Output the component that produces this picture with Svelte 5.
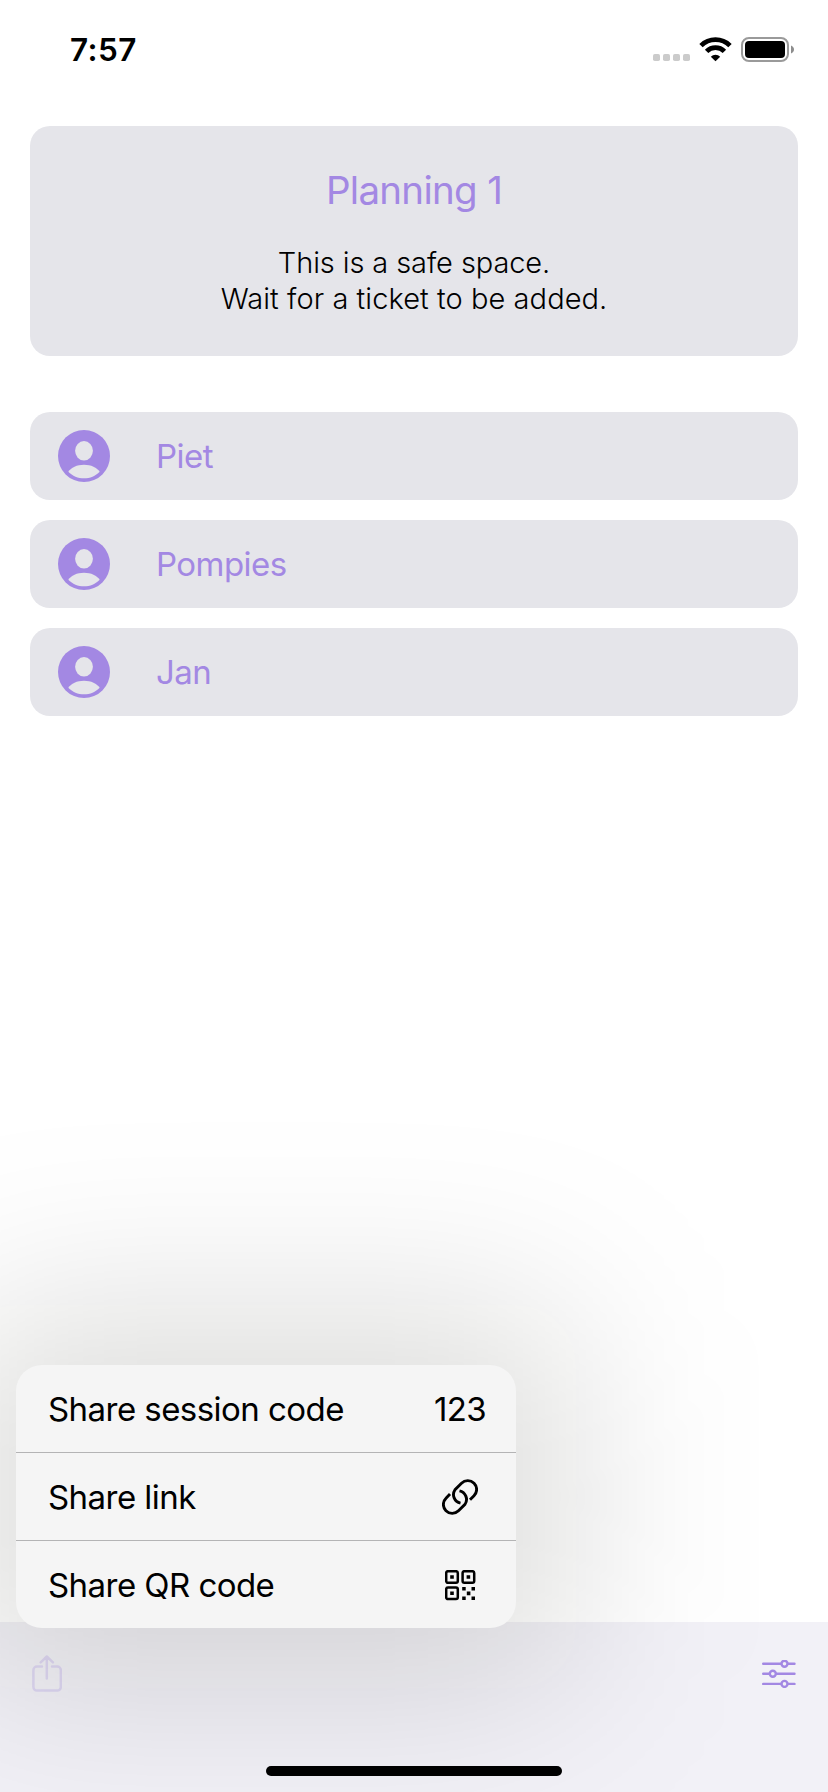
<script>
  const people = ['Piet', 'Pompies', 'Jan'];
  const actions = [
    { label: 'Share session code', icon: 'digits' },
    { label: 'Share link', icon: 'link' },
    { label: 'Share QR code', icon: 'qr' }
  ];
</script>

<div class="screen">
  <header class="status">
    <span class="time">7:57</span>
    <svg class="indicators" width="146" height="30" viewBox="650 34 146 30" aria-hidden="true">
      <g fill="#cbcbcb">
        <rect x="653" y="54" width="7" height="7" rx="1.8" />
        <rect x="663" y="54" width="7" height="7" rx="1.8" />
        <rect x="673" y="54" width="7" height="7" rx="1.8" />
        <rect x="683" y="54" width="7" height="7" rx="1.8" />
      </g>
      <g fill="none" stroke="#000" stroke-width="4.8">
        <path d="M701 45.6a20.8 20.8 0 0 1 29 0" />
        <path d="M706.6 51.4a12.6 12.6 0 0 1 17.8 0" />
      </g>
      <path d="M715.5 61.3l-4.7-4.6a6.6 6.6 0 0 1 9.4 0z" />
      <rect x="742" y="38" width="46" height="23" rx="7" fill="none" stroke="#9a9a9a" stroke-width="2" />
      <rect x="745" y="41" width="40" height="17" rx="4" />
      <path d="M791 45.5c4 1.5 4 6.500 0 8z" fill="#8d8d8d" />
    </svg>
  </header>

  <main>
    <section class="card">
      <h1>Planning 1</h1>
      <p><span class="lead">This is a safe space.</span><br />Wait for a ticket to be added.</p>
    </section>

    <ul class="people">
      {#each people as name}
        <li>
          <svg width="52" height="52" viewBox="0 0 52 52" aria-hidden="true">
            <circle cx="26" cy="26" r="26" fill="#a388e3" />
            <ellipse cx="26" cy="20.8" rx="8.900" ry="9.700" fill="#e5e5ea" />
            <path d="M10.300 41.700C13 37.500 19 34.700 26 34.700S39 37.500 41.700 41.700C37.500 46 32 48.300 26 48.300S14.500 46 10.300 41.700Z" fill="#e5e5ea" />
          </svg>
          <span>{name}</span>
        </li>
      {/each}
    </ul>
  </main>

  <footer class="toolbar">
    <div class="tools">
      <svg class="share" width="30" height="38" viewBox="0 0 30 38" aria-hidden="true">
        <path d="M10 11.500H5a3.600 3.600 0 0 0-3.600 3.600V32a3.600 3.600 0 0 0 3.600 3.600H25.200A3.600 3.600 0 0 0 28.800 32V15.100a3.600 3.600 0 0 0-3.600-3.600H20M14.800 23.500V2M8.700 7.400L14.800 1.500L20.900 7.400" />
      </svg>
      <svg class="sliders" width="34" height="28" viewBox="0 0 34 28" aria-hidden="true">
        <path d="M1.200 3.700H19M26 3.700H32.500M1.200 13.800H7.300M14.300 13.800H32.500M1.200 23.900H19M26 23.900H32.500" />
        <circle cx="22.500" cy="3.700" r="3" />
        <circle cx="10.800" cy="13.800" r="3" />
        <circle cx="22.500" cy="23.900" r="3" />
      </svg>
    </div>
  </footer>

  <div class="shade"></div>
  <div class="home"></div>

  <div class="menu">
    {#each actions as action}
      <div class="action">
        <span>{action.label}</span>
        <div class="glyph">
          {#if action.icon === 'digits'}
            <b>123</b>
          {:else if action.icon === 'link'}
            <svg width="36" height="36" viewBox="0 0 36 36" fill="none" stroke="#000" stroke-width="2.900" stroke-linecap="butt" aria-hidden="true">
              <path d="M8 15L4 19.200A8.800 8.800 0 0 0 16.500 31.800L23 25.300A8.800 8.800 0 0 0 17.500 11.800" />
              <path d="M28 20.800L32 16.800A8.800 8.800 0 0 0 19.500 4.200L13 10.700A8.800 8.800 0 0 0 18.500 24.200" />
            </svg>
          {:else}
            <svg class="qr" width="31" height="31" viewBox="0 0 31 31" aria-hidden="true">
              <g fill="none" stroke="#000" stroke-width="2.500">
                <rect x="1.200" y="1.200" width="11.600" height="11.600" rx="1.800" />
                <rect x="17.600" y="1.200" width="11.600" height="11.600" rx="1.800" />
                <rect x="1.200" y="17.500" width="11.600" height="11.600" rx="1.800" />
              </g>
              <path d="M5.200 5.200h3.600v3.600h-3.600zM21.600 5.200h3.600v3.600h-3.600zM5.200 21.500h3.600v3.600h-3.600zM17.200 17.100h3.500v3.500h-3.500zM26.500 17.100h3.500v3.500h-3.500zM21.800 21.600h3.600v3.600h-3.600zM17.200 26.600h3.500v3.500h-3.500zM26.500 26.600h3.500v3.500h-3.500z" />
            </svg>
          {/if}
        </div>
      </div>
    {/each}
  </div>
</div>

<style>
  :global(body) {
    margin: 0;
    background: #fff;
  }
  .screen {
    position: relative;
    display: flex;
    flex-direction: column;
    box-sizing: border-box;
    width: 828px;
    height: 1792px;
    overflow: hidden;
    background: #fff;
    color: #000;
    font-family: Inter, 'Liberation Sans', sans-serif;
  }
  .status {
    display: flex;
    justify-content: space-between;
    align-items: flex-start;
    height: 126px;
    box-sizing: border-box;
    padding: 34px 32px 0 70px;
  }
  .time {
    font-size: 31.500px;
    line-height: 32px;
    font-weight: 600;
    letter-spacing: 0.4px;
  }
  main {
    flex: 1;
    padding: 0 30px;
  }
  .card {
    box-sizing: border-box;
    height: 230px;
    padding-top: 40px;
    border-radius: 20px;
    background: #e5e5ea;
    text-align: center;
  }
  h1 {
    margin: 0;
    font-size: 38.500px;
    line-height: 48px;
    font-weight: 400;
    letter-spacing: -0.7px;
    color: #a388e3;
  }
  p {
    margin: 31px 0 0;
    font-size: 29px;
    line-height: 36px;
    font-weight: 300;
    letter-spacing: 0.07px;
  }
  .lead {
    letter-spacing: -0.1px;
  }
  .people {
    display: flex;
    flex-direction: column;
    gap: 20px;
    margin: 56px 0 0;
    padding: 0;
    list-style: none;
  }
  li {
    display: flex;
    align-items: center;
    gap: 46px;
    height: 88px;
    padding-left: 28px;
    border-radius: 20px;
    background: #e5e5ea;
    color: #a388e3;
    font-size: 33px;
    letter-spacing: -0.55px;
  }
  .toolbar {
    box-sizing: border-box;
    height: 170px;
    padding: 33px 32px 0;
    background: #f2f1f7;
  }
  .tools {
    display: flex;
    justify-content: space-between;
  }
  .share {
    fill: none;
    stroke: #ded7f3;
    stroke-width: 2.500;
    stroke-linecap: round;
    stroke-linejoin: round;
  }
  .sliders {
    margin-top: 5px;
    fill: none;
    stroke: #a388e3;
    stroke-width: 2.400;
    stroke-linecap: round;
  }
  .home {
    position: absolute;
    left: 266px;
    bottom: 16px;
    width: 296px;
    height: 10px;
    border-radius: 5px;
    background: #000;
  }
  /* Soft halo cast by the menu over the page and the toolbar */
  .shade {
    position: absolute;
    left: -44px;
    top: 1305px;
    width: 620px;
    height: 383px;
    border-radius: 60px;
    background: rgba(10, 10, 0, 0.132);
    filter: blur(92px);
  }
  .menu {
    position: absolute;
    left: 16px;
    top: 1365px;
    width: 500px;
    height: 263px;
    border-radius: 26px;
    background: #f5f5f5;
  }
  .action {
    display: flex;
    justify-content: space-between;
    align-items: center;
    box-sizing: border-box;
    height: 88px;
    padding: 0 16px 0 32px;
    border-bottom: 1px solid #b4b4b5;
    font-size: 33px;
    letter-spacing: -0.55px;
  }
  .action:last-child {
    height: 87px;
    border: 0;
  }
  .glyph {
    display: flex;
    justify-content: center;
    width: 80px;
  }
  .qr {
    margin-top: 1px;
  }
  b {
    font-weight: 400;
    letter-spacing: -0.700px;
  }
</style>
